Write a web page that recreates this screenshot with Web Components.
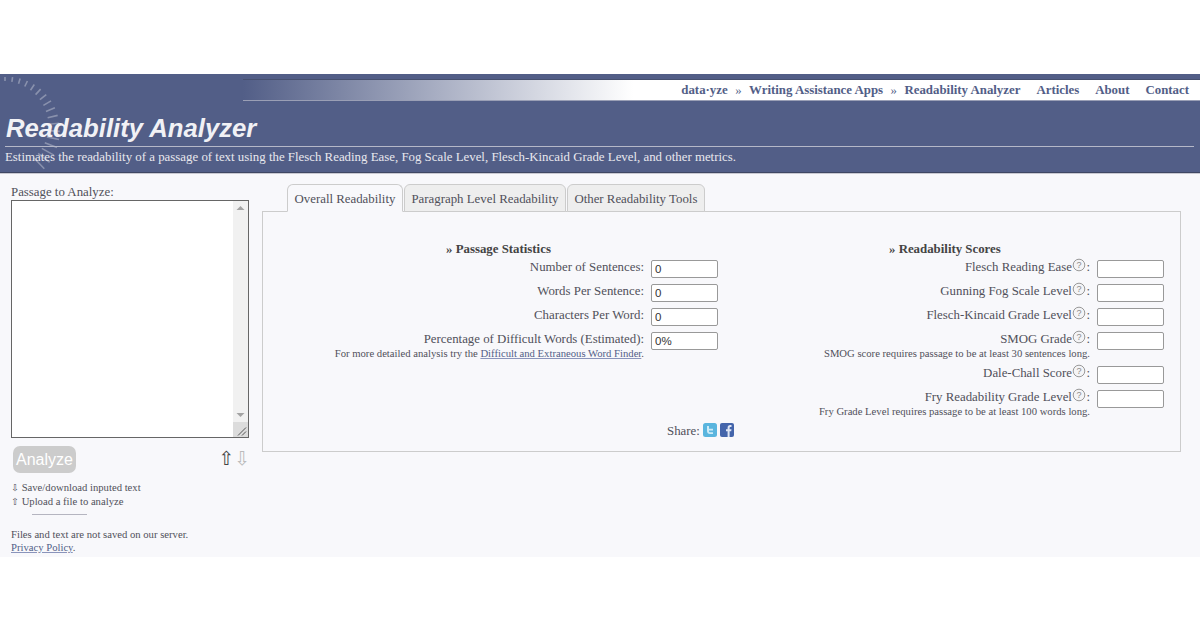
<!DOCTYPE html>
<html lang="en">
<head>
<meta charset="utf-8">
<title>Readability Analyzer</title>
<style>
    html, body { margin: 0; background: #fff; }
    body { padding-top: 74px; height: 557px; box-sizing: border-box; overflow: hidden; font: 12.85px "Liberation Serif", serif; color: #50505a; }
    .layout { display: flex; height: 384px; background: #f8f8fb; }
</style>
</head>
<body>
<site-header></site-header>
<div class="layout">
    <side-panel></side-panel>
    <tab-panel>
        <stat-column heading="» Passage Statistics" offset="174">
            <stat-row label="Number of Sentences" value="0"></stat-row>
            <stat-row label="Words Per Sentence" value="0"></stat-row>
            <stat-row label="Characters Per Word" value="0"></stat-row>
            <stat-row label="Percentage of Difficult Words (Estimated)" value="0%">For more detailed analysis try the <a href="#" style="color:#525e87;text-decoration:underline;text-decoration-color:#8a94bb">Difficult and Extraneous Word Finder</a>.</stat-row>
        </stat-column>
        <stat-column heading="» Readability Scores" offset="171">
            <stat-row help label="Flesch Reading Ease"></stat-row>
            <stat-row help label="Gunning Fog Scale Level"></stat-row>
            <stat-row help label="Flesch-Kincaid Grade Level"></stat-row>
            <stat-row help label="SMOG Grade">SMOG score requires passage to be at least 30 sentences long.</stat-row>
            <stat-row help label="Dale-Chall Score"></stat-row>
            <stat-row help label="Fry Readability Grade Level">Fry Grade Level requires passage to be at least 100 words long.</stat-row>
        </stat-column>
        <share-links slot="footer"></share-links>
    </tab-panel>
</div>

<script>
class SiteHeader extends HTMLElement {
    constructor() {
        super();
        this.attachShadow({mode: 'open'});
        // dial behind the title, ticks get longer going clockwise
        let ticks = '';
        for (let i = 0; i < 17; i++) {
            const a = (-90 + i * 8.5) * Math.PI / 180;
            const len = 4 + i * 0.7;
            const r1 = 49 + len / 2, r2 = 49 - len / 2;
            ticks += `<line x1="${5 + Math.cos(a) * r1}" y1="${54 + Math.sin(a) * r1}" x2="${5 + Math.cos(a) * r2}" y2="${54 + Math.sin(a) * r2}"/>`;
        }
        this.shadowRoot.innerHTML = `
            <style>
                :host {
                    display: block;
                    position: relative;
                    height: 99px;
                    box-sizing: border-box;
                    background: #525e87;
                    border-bottom: 1px solid #3f4763;
                    box-shadow: 0 1px 0 #c9c9d2;
                    padding-top: 5px;
                    overflow: hidden;
                }
                svg {
                    position: absolute;
                    left: 0;
                    top: 0;
                    width: 80px;
                    height: 98px;
                    stroke: rgba(255,255,255,0.32);
                    stroke-width: 1.6;
                }
                nav {
                    display: flex;
                    justify-content: flex-end;
                    align-items: center;
                    gap: 16px;
                    height: 20px;
                    margin-left: 243px;
                    padding-right: 11px;
                    background: linear-gradient(to right, #525e87 0, #fff 390px);
                    border-top: 1px solid #47506f;
                    border-bottom: 1px solid #9a9fb5;
                    font: bold 12.85px "Liberation Serif", serif;
                    color: #525e87;
                }
                nav span.crumbs {
                    display: flex;
                    gap: 7.5px;
                }
                nav i {
                    font-style: normal;
                    font-weight: normal;
                }
                h1 {
                    position: relative;
                    margin: 12px 0 0 6px;
                    font: italic bold 25.7px/30px "Liberation Sans", sans-serif;
                    color: #f1f1f5;
                }
                hr {
                    position: relative;
                    margin: 3px 6px 0 5px;
                    height: 1px;
                    border: 0;
                    background: #b5b8c8;
                }
                p {
                    position: relative;
                    margin: 3px 0 0 5px;
                    font: 12.86px/15px "Liberation Serif", serif;
                    color: #e8e8ee;
                }
            </style>
            <svg viewBox="0 0 80 98">${ticks}</svg>
            <nav>
                <span class="crumbs"><span>data·yze</span><i>»</i><span>Writing Assistance Apps</span><i>»</i><span>Readability Analyzer</span></span>
                <span>Articles</span>
                <span>About</span>
                <span>Contact</span>
            </nav>
            <h1>Readability Analyzer</h1>
            <hr>
            <p>Estimates the readability of a passage of text using the Flesch Reading Ease, Fog Scale Level, Flesch-Kincaid Grade Level, and other metrics.</p>
        `;
    }
}
customElements.define("site-header", SiteHeader);

class SidePanel extends HTMLElement {
    constructor() {
        super();
        this.attachShadow({mode: 'open'});
        this.shadowRoot.innerHTML = `
            <style>
                :host {
                    display: block;
                    flex: 0 0 262px;
                    box-sizing: border-box;
                    padding: 12px 13px 0 11px;
                    font: 12.85px/15px "Liberation Serif", serif;
                    color: #50505a;
                }
                .box {
                    position: relative;
                    width: 238px;
                    height: 238px;
                }
                textarea {
                    display: block;
                    box-sizing: border-box;
                    width: 100%;
                    height: 100%;
                    margin: 0;
                    padding: 2px 17px 2px 2px;
                    background: #fff;
                    border: 1px solid #666;
                    overflow: hidden;
                    resize: none;
                    outline: 0;
                }
                /* the photograph hides native scrollbars, so this one is drawn over the box */
                .scrollbar {
                    position: absolute;
                    top: 1px;
                    right: 1px;
                    bottom: 1px;
                    width: 15px;
                    display: flex;
                    flex-direction: column;
                    align-items: center;
                    justify-content: space-between;
                    background: #f1f1f1;
                }
                .scrollbar svg {
                    display: block;
                    width: 15px;
                    height: 15px;
                }
                .scrollbar .grip {
                    background: #dcdcdc;
                }
                .scrollbar .down {
                    margin-top: auto;
                }
                .actions {
                    display: flex;
                    justify-content: space-between;
                    align-items: center;
                    margin: 8px 0 0 2px;
                }
                button {
                    all: unset;
                    box-sizing: border-box;
                    width: 63px;
                    height: 27px;
                    text-align: center;
                    background: #ccc;
                    border-radius: 7px;
                    color: #fff;
                    font: 16px/27px "Liberation Sans", sans-serif;
                }
                .arrows {
                    display: flex;
                    margin: -3px -1px 0 0;
                    font: 19px/20px "DejaVu Sans", sans-serif;
                    color: #444;
                }
                .arrows span + span {
                    color: #bbb;
                }
                .links {
                    margin-top: 8px;
                    font-size: 10.67px;
                    line-height: 13.5px;
                }
                .links b {
                    font: 9.5px "DejaVu Sans", sans-serif;
                }
                hr {
                    width: 55px;
                    height: 1px;
                    margin: 6px 0 13px 21px;
                    border: 0;
                    background: #b5b5c0;
                }
                .note {
                    font-size: 10.67px;
                    line-height: 13px;
                }
                a {
                    color: #525e87;
                    text-decoration-color: #8a94bb;
                }
            </style>
            <label for="passage">Passage to Analyze:</label>
            <div class="box">
                <textarea id="passage"></textarea>
                <div class="scrollbar">
                    <svg viewBox="0 0 15 15"><path d="M7.500 5l4 4h-8z" fill="#a3a3a3"/></svg>
                    <svg class="down" viewBox="0 0 15 15"><path d="M7.500 10l4-4h-8z" fill="#a3a3a3"/></svg>
                    <svg class="grip" viewBox="0 0 15 15"><path d="M5 13.500l8-8M9 13.500l4-4" stroke="#555" fill="none"/></svg>
                </div>
            </div>
            <div class="actions">
                <button>Analyze</button>
                <span class="arrows"><span>⇧</span><span>⇩</span></span>
            </div>
            <div class="links">
                <div><b>⇩</b> Save/download inputed text</div>
                <div><b>⇧</b> Upload a file to analyze</div>
            </div>
            <hr>
            <div class="note">Files and text are not saved on our server.<br><a href="#">Privacy Policy</a>.</div>
        `;
    }
}
customElements.define("side-panel", SidePanel);

class TabPanel extends HTMLElement {
    constructor() {
        super();
        this.attachShadow({mode: 'open'});
        this.shadowRoot.innerHTML = `
            <style>
                :host {
                    display: block;
                    flex: 0 0 919px;
                    padding-top: 11px;
                    font: 12.85px/15px "Liberation Serif", serif;
                }
                .tabs {
                    display: flex;
                    gap: 1px;
                    padding-left: 25px;
                    position: relative;
                    z-index: 1;
                }
                .tab {
                    box-sizing: border-box;
                    height: 28px;
                    padding: 7px 6.5px 0;
                    background: #eee;
                    border: 1px solid #ccc;
                    border-radius: 6px 6px 0 0;
                    color: #50505a;
                }
                .tab.on {
                    background: #f8f8fb;
                    border-bottom-color: #f8f8fb;
                }
                .body {
                    box-sizing: border-box;
                    height: 241px;
                    margin-top: -1px;
                    padding: 30px 0 0 9px;
                    border: 1px solid #ccc;
                }
                .cols {
                    display: grid;
                    grid-template-columns: 446px 446px;
                    height: 182px;
                }
            </style>
            <div class="tabs">
                <div class="tab on">Overall Readability</div>
                <div class="tab">Paragraph Level Readability</div>
                <div class="tab">Other Readability Tools</div>
            </div>
            <div class="body">
                <div class="cols"><slot></slot></div>
                <slot name="footer"></slot>
            </div>
        `;
    }
}
customElements.define("tab-panel", TabPanel);

class StatColumn extends HTMLElement {
    constructor() {
        super();
        this.attachShadow({mode: 'open'});
        this.shadowRoot.innerHTML = `
            <style>
                :host {
                    display: flex;
                    flex-direction: column;
                    gap: 6px;
                }
                h3 {
                    margin: 0 0 -3px;
                    font: bold 12.85px/15px "Liberation Serif", serif;
                    color: #444;
                }
            </style>
            <h3></h3>
            <slot></slot>
        `;
    }

    connectedCallback() {
        const h3 = this.shadowRoot.querySelector("h3");
        h3.textContent = this.getAttribute("heading");
        h3.style.marginLeft = this.getAttribute("offset") + "px";
    }
}
customElements.define("stat-column", StatColumn);

class StatRow extends HTMLElement {
    constructor() {
        super();
        this.attachShadow({mode: 'open'});
        this.shadowRoot.innerHTML = `
            <style>
                :host {
                    display: grid;
                    grid-template-columns: 1fr 67px;
                    column-gap: 7px;
                    color: #50505a;
                }
                .label {
                    height: 14px;
                    text-align: right;
                    font: 12.85px/14px "Liberation Serif", serif;
                }
                .note {
                    display: block;
                    text-align: right;
                    font: 10.67px/13px "Liberation Serif", serif;
                    margin-top: 1px;
                }
                input {
                    box-sizing: border-box;
                    width: 67px;
                    height: 18px;
                    margin: 0;
                    padding: 1px 3px;
                    background: #fff;
                    border: 1px solid #999;
                    border-radius: 2px;
                    font: 11.5px "Liberation Sans", sans-serif;
                    color: #333;
                    outline: 0;
                }
                svg {
                    width: 14px;
                    height: 14px;
                    margin: -3px 0 -3px 0.5px;
                    vertical-align: 2px;
                }
            </style>
            <div>
                <div class="label"></div>
                <div class="note"><slot></slot></div>
            </div>
            <input>
        `;
    }

    connectedCallback() {
        const help = this.hasAttribute("help") ? `<svg viewBox="0 0 14 14"><circle cx="7" cy="7" r="5.8" fill="#f4f4f6" stroke="#999"/><text x="7" y="10.2" text-anchor="middle" font-family="Liberation Sans" font-size="9" fill="#8a8a8a">?</text></svg>` : "";
        this.shadowRoot.querySelector(".label").innerHTML = this.getAttribute("label") + help + ":";
        this.shadowRoot.querySelector("input").value = this.getAttribute("value") || "";
        // rows without a note are only as tall as their input
        if (!this.textContent.trim()) {
            this.shadowRoot.querySelector(".note").style.display = "none";
        }
    }
}
customElements.define("stat-row", StatRow);

class ShareLinks extends HTMLElement {
    constructor() {
        super();
        this.attachShadow({mode: 'open'});
        this.shadowRoot.innerHTML = `
            <style>
                :host {
                    display: flex;
                    align-items: center;
                    gap: 3px;
                    margin-left: 395px;
                    font: 12.85px/15px "Liberation Serif", serif;
                    color: #50505a;
                }
                svg {
                    width: 14px;
                    height: 14px;
                    margin-top: -3px;
                }
            </style>
            <span>Share:</span>
            <svg viewBox="0 0 14 14">
                <rect width="14" height="14" rx="2.5" fill="#5ab5de"/>
                <path d="M4 3v5c0 2 1.2 3 3 3h3V9.300H7.300C6.500 9.300 6 8.800 6 8.200v-.7h4V5.800H6V3z" fill="#cdebf7"/>
            </svg>
            <svg viewBox="0 0 14 14">
                <rect width="14" height="14" rx="2" fill="#4465ab"/>
                <path d="M7.600 14V8.300H6V6.200h1.600V4.800C7.600 3 8.600 2 10.200 2h1.300v2h-.9c-.7 0-1 .3-1 1v1.200h1.900l-.3 2.100H9.600V14z" fill="#dfe6f4"/>
            </svg>
        `;
    }
}
customElements.define("share-links", ShareLinks);
</script>
</body>
</html>
